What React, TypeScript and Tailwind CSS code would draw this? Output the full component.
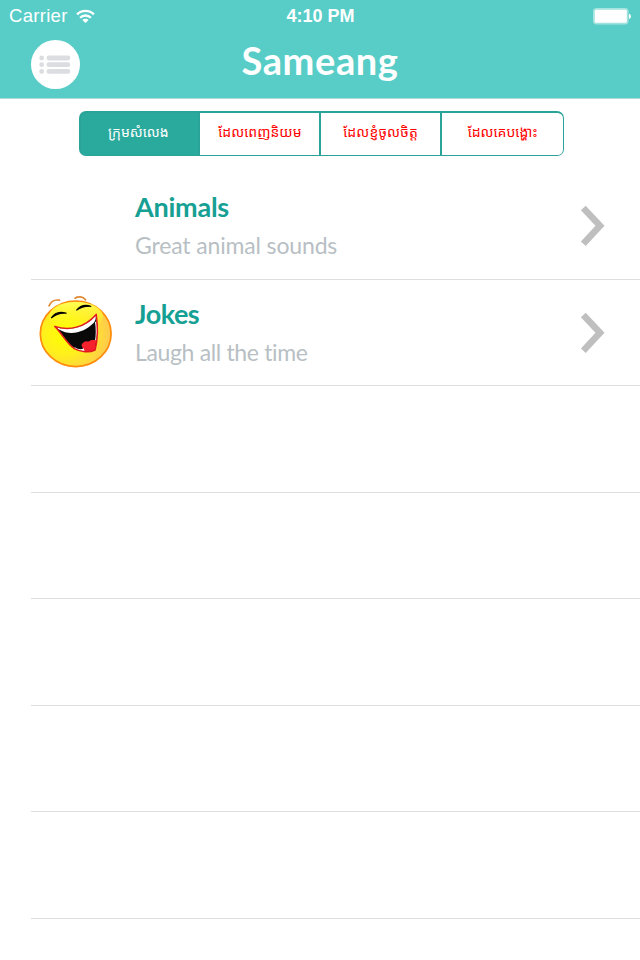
import { clsx } from "clsx";

type Category = {
  title: string;
  subtitle: string;
  icon?: "laugh";
  titleSpacing: string;
  subtitleSpacing: string;
};

const TABS = [
  { label: "ក្រុមសំលេង", width: "w-[119px]", text: "pr-[2px]" },
  { label: "ដែលពេញនិយម", width: "w-[121px]", text: "pl-[1px]" },
  { label: "ដែលខ្ញំចូលចិត្ត", width: "w-[121px]", text: "tracking-[0.1px]" },
  { label: "ដែលគេបង្ហោះ", width: "w-[122px]", text: "pl-[1px]" },
];

const CATEGORIES: Category[] = [
  {
    title: "Animals",
    subtitle: "Great animal sounds",
    titleSpacing: "tracking-[-0.25px]",
    subtitleSpacing: "tracking-[-0.15px]",
  },
  {
    title: "Jokes",
    subtitle: "Laugh all the time",
    icon: "laugh",
    titleSpacing: "tracking-[-0.5px]",
    subtitleSpacing: "tracking-[-0.35px]",
  },
];

const EMPTY_ROWS = 5;

function WifiIcon() {
  return (
    <svg width="19" height="15" viewBox="0 0 20 15" fill="none" stroke="white" strokeWidth="2.5">
      <path d="M1.1 5.3C6 .4 14 .4 18.9 5.3" />
      <path d="M4.3 8.8c3.2-3.1 8.2-3.1 11.4 0" />
      <path d="M10 14.3 6.7 11.2c1.8-1.7 4.8-1.7 6.6 0Z" fill="white" stroke="none" />
    </svg>
  );
}

function BatteryIcon() {
  return (
    <svg width="39" height="17" viewBox="0 0 39 17">
      <rect x=".5" y=".5" width="34.5" height="15.5" rx="2.5" fill="#9be2dc" stroke="#a5e4df" />
      <rect x="1.7" y="1.7" width="32.1" height="13.1" rx="1.2" fill="white" />
      <path d="M36 5.7c2.6.8 2.6 4.4 0 5.2Z" fill="white" />
    </svg>
  );
}

function MenuIcon() {
  return (
    <svg width="32" height="20" viewBox="0 0 32 20" fill="#dcdde1">
      {[3, 9.7, 16.4].map((y) => (
        <g key={y}>
          <circle cx="2.7" cy={y} r="2.4" />
          <rect x="7.5" y={y - 2.4} width="23.8" height="4.8" rx="2.4" />
        </g>
      ))}
    </svg>
  );
}

function LaughIcon() {
  return (
    <svg width="74" height="74" viewBox="0 0 74 74" fill="none">
      <defs>
        <radialGradient id="face" cx=".34" cy=".52" r=".65">
          <stop offset="0" stopColor="#ffff00" />
          <stop offset=".45" stopColor="#fff01c" />
          <stop offset="1" stopColor="#ffca4d" />
        </radialGradient>
        <linearGradient id="shine" x1="0" y1="0" x2="0" y2="1">
          <stop offset="0" stopColor="#ffff55" />
          <stop offset="1" stopColor="#ffff00" stopOpacity="0" />
        </linearGradient>
      </defs>
      <ellipse cx="36.7" cy="38.8" rx="35.4" ry="32.8" fill="url(#face)" stroke="#ff8c0a" strokeWidth="1.7" />
      <ellipse cx="37" cy="21" rx="27" ry="14" fill="url(#shine)" />
      <path d="M10 10.8C12 6.7 16 4.4 20.5 5.2M36 3.2c3-2.1 8-1.8 10.5 1.6" stroke="#e08a35" strokeWidth="1.7" strokeLinecap="round" />
      <path d="M12.2 23.1c3.3-5.4 9-6.9 15.4-4.8-6.2-.8-10.8.8-15.4 4.8Z" fill="black" stroke="black" strokeWidth="1.1" />
      <path d="M37.4 15.3c4-5 9-6 14.8-3.9-5.8-.6-10 .6-14.8 3.9Z" fill="black" stroke="black" strokeWidth="1.1" />
      <path d="M16.5 32C30.5 36.5 46 33 57 20c1.7 12.2 1.6 24.3-1.2 34.6-5.5 2.6-14 2.1-20.2-1.3C28 48.2 24 39.2 16.5 32Z" fill="#090909" />
      <path d="M16.5 32C30.5 36.5 46 33 57 20c0 4-.8 6-2.4 8C46 36.4 32.4 42 20 34.6Z" fill="white" />
      <path d="M56 27c1 6.5 1 12.6 0 19l1.3-.5c1-6.8 1-13 .1-19Z" fill="white" />
      <path d="M43 55.6c3.2-2.4-1.8-3.6 0-6.6 1.5-2.3 4-3.5 6-2.3 2.5-1.6 5-2 8.3-1.2l-1.5 9.2c-3.8 1.9-8.7 2-12.8.9Z" fill="#f5212d" />
      <path d="M35.5 52c3.6 2.4 6.6 2.8 9.2 1.3l.8 2.8c-3.6.3-7.2-.8-10-2.8Z" fill="white" />
      <path d="M15.8 31.4C30 36 45.5 32.8 57.2 19.4c1.8 12.4 1.7 24.9-1.1 35.6-5.6 2.9-14.5 2.3-20.8-1.3C27.6 48.7 23.6 39.2 15.8 31.4Z" stroke="#e21a20" strokeWidth="1.5" strokeLinejoin="round" />
    </svg>
  );
}

function Chevron() {
  return (
    <svg width="25" height="42" viewBox="0 0 25 42" fill="none" stroke="#bfbfbf" strokeWidth="6.6">
      <path d="m3.3 2.9 16.7 17.9L3.3 38.7" />
    </svg>
  );
}

function Header() {
  return (
    <header className="h-[99px] border-b border-[#b5d9d6] bg-[#58cdc7] text-white">
      <div className="grid h-8 grid-cols-3 items-center pr-[8px] pl-[9px]">
        <div className="flex items-center gap-[8px] font-['Liberation_Sans'] text-[18.5px] tracking-[0.3px]">
          <span>Carrier</span>
          <WifiIcon />
        </div>
        <div className="text-center font-['Liberation_Sans'] text-[18px] font-bold">4:10 PM</div>
        <div className="flex justify-end">
          <BatteryIcon />
        </div>
      </div>
      <div className="grid grid-cols-[80px_1fr_80px] items-start">
        <button
          type="button"
          aria-label="Menu"
          className="mt-[8px] ml-[31px] flex size-[49px] items-center justify-center rounded-full bg-white pr-[2px]"
        >
          <MenuIcon />
        </button>
        <h1 className="mt-[3px] text-center font-['Lato'] text-[38px] leading-[50px] font-bold tracking-[0.6px]">
          Sameang
        </h1>
      </div>
    </header>
  );
}

function Tabs() {
  return (
    <div className="mt-3 ml-[79px] flex h-[45px] w-[485px] rounded-[7px] bg-[#2aa398] p-[1.5px] font-['Noto_Sans_Khmer','Noto_Sans',sans-serif] text-[14px]">
      <div className="flex flex-1 gap-[1.5px] overflow-hidden rounded-[5.5px]">
        {TABS.map((tab, i) => (
          <button
            key={tab.label}
            type="button"
            className={clsx(
              "flex shrink items-center justify-center pb-[4px] whitespace-nowrap",
              tab.width,
              tab.text,
              i === 0 ? "bg-[#2aa99d] text-white" : "bg-white text-[#ff0000]",
            )}
          >
            {tab.label}
          </button>
        ))}
      </div>
    </div>
  );
}

function CategoryRow({ category }: { category: Category }) {
  return (
    <li className="ml-[31px] flex h-[106.5px] border-b border-[#dedede]">
      <div className="w-[104px] pt-[15px] pl-[8px]">{category.icon === "laugh" && <LaughIcon />}</div>
      <div className="flex-1 font-['Lato'] whitespace-nowrap">
        <h2 className={clsx("mt-[17px] text-[27px] leading-[34px] font-bold text-[#16a094]", category.titleSpacing)}>
          {category.title}
        </h2>
        <p className={clsx("mt-[6px] text-[23px] leading-[30px] text-[#b8bfc4]", category.subtitleSpacing)}>
          {category.subtitle}
        </p>
      </div>
      <div className="pt-[32px] pr-[35px]">
        <Chevron />
      </div>
    </li>
  );
}

export default function App() {
  return (
    <div className="h-[960px] w-[640px] overflow-hidden bg-white">
      <Header />
      <Tabs />
      <ul className="mt-[17px]">
        {CATEGORIES.map((category) => (
          <CategoryRow key={category.title} category={category} />
        ))}
        {Array.from({ length: EMPTY_ROWS }, (_, i) => (
          <li key={i} className="ml-[31px] h-[106.5px] border-b border-[#dedede]" />
        ))}
      </ul>
    </div>
  );
}
